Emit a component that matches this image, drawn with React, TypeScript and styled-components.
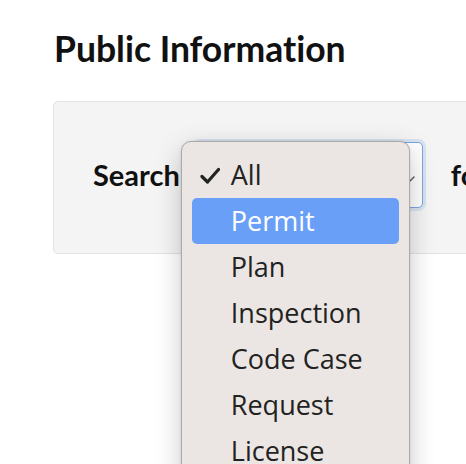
import React from 'react'
import styled, { createGlobalStyle } from 'styled-components'

const GlobalStyle = createGlobalStyle`
	body {
		margin: 0;
		padding: 0;
		background: #ffffff;
		font-family: Lato, 'Open Sans', sans-serif;
		color: #111;
	}
`

const Page = styled.main`
	box-sizing: border-box;
	height: 464px;
	overflow: hidden;
	padding: 24px 0 0 53px;
	width: 466px;
`

const Title = styled.h2`
	margin: 0 0 0 1px;
	font-family: Lato, sans-serif;
	font-weight: 700;
	font-size: 35.5px;
	line-height: 50px;
	font-variant-ligatures: none;
	color: #111;
`

const Panel = styled.section`
	margin-top: 27px;
	width: 640px;
	height: 153px;
	background: #f4f4f4;
	border: 1px solid #e2e2e2;
	border-radius: 5px;
	box-sizing: border-box;
	display: flex;
	align-items: center;
	gap: 15px;
	padding: 0 0 6px 39px;
`

const Label = styled.label`
	font-family: Lato, sans-serif;
	font-weight: 700;
	font-size: 29px;
	color: #111;
`

const SelectWrap = styled.div`
	position: relative;
	flex: none;
	width: 228px;
	height: 66px;
	margin-right: 13px;
`

const SelectBox = styled.div`
	box-sizing: border-box;
	height: 100%;
	background: #ffffff;
	border: 1.5px solid #7aa7e6;
	border-radius: 5px;
	box-shadow: 0 0 0 3px rgba(130, 170, 230, 0.25);
	display: flex;
	align-items: center;
	justify-content: flex-end;
	padding-right: 7px;
`

const Menu = styled.ul`
	position: absolute;
	left: -14px;
	top: -1px;
	width: 229px;
	margin: 0;
	padding: 10px 10px 20px;
	box-sizing: border-box;
	list-style: none;
	background: #ebe6e3;
	border: 1px solid #aeaaa8;
	border-radius: 10px;
	box-shadow: 0 8px 26px rgba(0, 0, 0, 0.22), 0 0 2px rgba(0, 0, 0, 0.15);
	z-index: 5;
`

const Item = styled.li<{ active?: boolean }>`
	display: flex;
	align-items: center;
	height: 46px;
	padding-left: 8px;
	gap: 11px;
	border-radius: 5px;
	font-family: 'Open Sans', 'Noto Sans', sans-serif;
	font-size: 27px;
	color: ${({ active }) => (active ? '#ffffff' : '#222')};
	background: ${({ active }) => (active ? '#699ff7' : 'transparent')};
`

const CheckSlot = styled.span`
	width: 20px;
	height: 18px;
	display: flex;
	margin-top: 3px;
`

const options = ['All', 'Permit', 'Plan', 'Inspection', 'Code Case', 'Request', 'License']

export default function App() {
	return (
		<>
			<GlobalStyle />
			<Page>
				<Title>Public Information</Title>
				<Panel>
					<Label>Search</Label>
					<SelectWrap>
						<SelectBox>
							<svg width="10" height="14" viewBox="0 0 10 14">
								<path d="M1 9 L5 13 M5 13 L9 9" stroke="#666" strokeWidth="1.6" fill="none" strokeLinecap="round" />
							</svg>
						</SelectBox>
						<Menu>
							{options.map((o, i) => (
								<Item key={o} active={o === 'Permit'}>
									<CheckSlot>
										{i === 0 && (
											<svg width="20" height="18" viewBox="0 0 20 18">
												<path d="M2 9.5 L7.5 15 L18.5 2.5" stroke="#222" strokeWidth="3.2" fill="none" strokeLinecap="round" strokeLinejoin="round" />
											</svg>
										)}
									</CheckSlot>
									{o}
								</Item>
							))}
						</Menu>
					</SelectWrap>
					<Label>for</Label>
				</Panel>
			</Page>
		</>
	)
}
